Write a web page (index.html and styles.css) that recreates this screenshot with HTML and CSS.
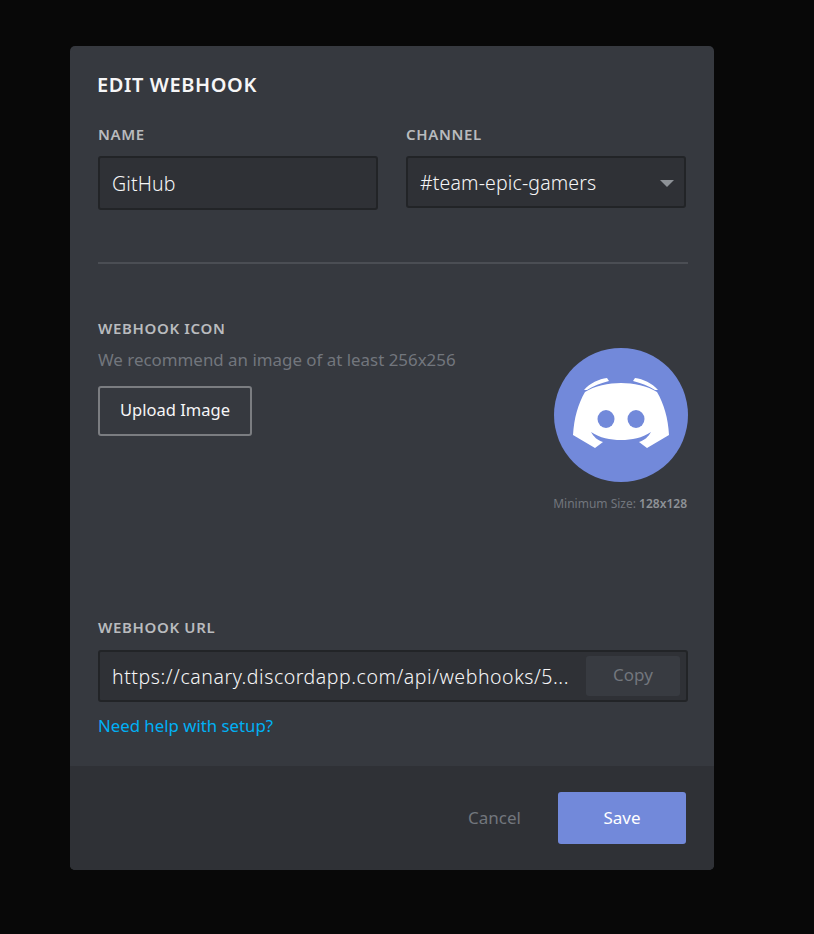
FILE: index.html
```html
<!DOCTYPE html>
<html lang="en">
<head>
    <meta charset="UTF-8">
    <title>Edit Webhook</title>
    <link rel="stylesheet" href="styles.css">
</head>
<body>
    <div class="modal">
        <div class="modal-body">
            <h1 class="modal-title">EDIT WEBHOOK</h1>

            <div class="top-row">
                <div class="field">
                    <div class="label">NAME</div>
                    <div class="input input-name">GitHub</div>
                </div>
                <div class="field">
                    <div class="label">CHANNEL</div>
                    <div class="input input-select">
                        <span>#team-epic-gamers</span>
                        <span class="caret"></span>
                    </div>
                </div>
            </div>

            <div class="divider"></div>

            <div class="icon-row">
                <div class="icon-left">
                    <div class="label">WEBHOOK ICON</div>
                    <p class="hint">We recommend an image of at least 256x256</p>
                    <div class="btn-upload">Upload Image</div>
                </div>
                <div class="icon-right">
                    <div class="avatar">
                        <svg width="134" height="134" viewBox="0 0 134 134">
                            <path fill="#fff" d="M30 42C36 35 45 31 53 30L55 33C47 35 39 38 33 42Z"/>
                            <path fill="#fff" d="M104 42C98 35 89 31 81 30L79 33C87 35 95 38 101 42Z"/>
                            <path fill="#fff" d="M31 44C40 38 55 35 67 35C79 35 94 38 103 44C110 56 114 70 115 87L93 100L85 94C91 92 94 89 97 84C88 90 78 92 67 92C56 92 46 90 37 84C40 89 43 92 49 94L41 100L19 87C20 70 24 56 31 44Z"/>
                            <ellipse cx="52" cy="71" rx="8.5" ry="9" fill="#7289da"/>
                            <ellipse cx="82" cy="71" rx="8.5" ry="9" fill="#7289da"/>
                        </svg>
                    </div>
                    <div class="min-size">Minimum Size: <b>128x128</b></div>
                </div>
            </div>

            <div class="label">WEBHOOK URL</div>
            <div class="input input-url">
                <span class="url-text">https://canary.discordapp.com/api/webhooks/5...</span>
                <span class="btn-copy">Copy</span>
            </div>
            <a class="help-link" href="#">Need help with setup?</a>
        </div>
        <div class="modal-footer">
            <span class="btn-cancel">Cancel</span>
            <span class="btn-save">Save</span>
        </div>
    </div>
</body>
</html>
```

FILE: styles.css
```css
body {
    margin: 0;
    background-color: #080808;
    font-family: "Noto Sans", Arial, sans-serif;
    color: #f6f6f7;
}
.modal {
    width: 644px;
    height: 824px;
    margin: 46px 0 0 70px;
    background-color: #36393f;
    border-radius: 5px;
    overflow: hidden;
    display: flex;
    flex-direction: column;
}
.modal-body {
    flex: 1;
    padding: 28px 26px 0 28px;
}
.modal-title {
    margin: 0 0 30px -1px;
    font-size: 20px;
    line-height: 22px;
    font-weight: 600;
    letter-spacing: 0.6px;
    color: #f6f6f7;
}
.top-row {
    display: flex;
    gap: 28px;
}
.field {
    width: 280px;
}
.label {
    font-size: 15px;
    line-height: 16px;
    font-weight: 600;
    color: #b9bbbe;
    letter-spacing: 0.65px;
}
.input {
    box-sizing: border-box;
    display: flex;
    align-items: center;
    margin-top: 14px;
    background-color: #2f3136;
    border: 2px solid #222427;
    border-radius: 3px;
    font-size: 19.5px;
    font-weight: 300;
    letter-spacing: 0.15px;
    color: #f6f6f7;
    padding-left: 12px;
}
.input-name {
    height: 54px;
}
.input-select {
    height: 52px;
    justify-content: space-between;
    padding-right: 10px;
}
.caret {
    width: 0;
    height: 0;
    border-left: 7px solid transparent;
    border-right: 7px solid transparent;
    border-top: 7px solid #8e9297;
    margin-top: 3px;
}
.divider {
    height: 2px;
    margin-top: 52px;
    background-color: #4b4e54;
}
.icon-row {
    display: flex;
    justify-content: space-between;
    height: 355px;
}
.icon-left {
    padding-top: 56px;
}
.hint {
    margin: 13px 0 0;
    font-size: 16.9px;
    line-height: 22px;
    color: #72767d;
}
.btn-upload {
    box-sizing: border-box;
    width: 154px;
    height: 50px;
    margin-top: 15px;
    padding-bottom: 3px;
    border: 2px solid #7b7d81;
    border-radius: 3px;
    display: flex;
    align-items: center;
    justify-content: center;
    font-size: 16.5px;
    color: #f6f6f7;
}
.icon-right {
    padding-top: 84px;
    display: flex;
    flex-direction: column;
    align-items: flex-end;
}
.avatar {
    width: 134px;
    height: 134px;
    border-radius: 50%;
    background-color: #7289da;
}
.avatar svg {
    display: block;
}
.min-size {
    margin: 14px 1px 0 0;
    font-size: 12px;
    line-height: 16px;
    color: #72767d;
}
.min-size b {
    font-weight: 600;
    color: #8e9297;
}
.input-url {
    height: 52px;
    margin-top: 15px;
    justify-content: space-between;
    padding-right: 6px;
    letter-spacing: 0.55px;
}
.url-text {
    white-space: nowrap;
}
.btn-copy {
    box-sizing: border-box;
    width: 94px;
    height: 40px;
    padding-bottom: 4px;
    display: flex;
    align-items: center;
    justify-content: center;
    background-color: #383b41;
    border-radius: 3px;
    font-size: 17px;
    font-weight: 400;
    letter-spacing: 0;
    color: #72767d;
}
.help-link {
    display: block;
    margin-top: 13px;
    font-size: 16.8px;
    line-height: 22px;
    color: #00b0f4;
    text-decoration: none;
}
.modal-footer {
    height: 104px;
    background-color: #2f3136;
    display: flex;
    align-items: center;
    justify-content: flex-end;
    padding: 0 28px 0 0;
}
.btn-cancel {
    margin-right: 37px;
    padding-bottom: 2px;
    font-size: 17px;
    color: #72767d;
}
.btn-save {
    box-sizing: border-box;
    width: 128px;
    height: 52px;
    padding-bottom: 2px;
    display: flex;
    align-items: center;
    justify-content: center;
    background-color: #7289da;
    border-radius: 3px;
    font-size: 17px;
    color: #fff;
}
```
